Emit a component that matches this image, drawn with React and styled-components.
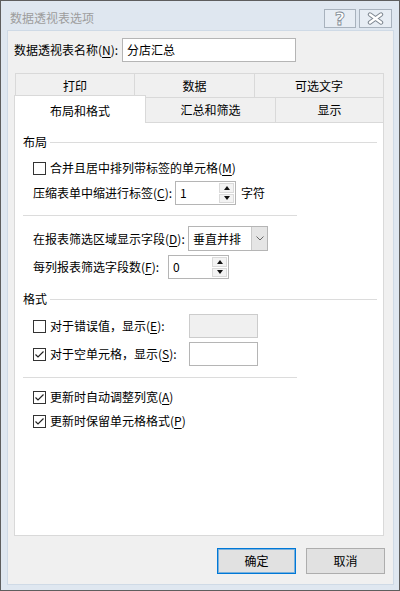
import React from 'react';
import styled, { createGlobalStyle } from 'styled-components';

const FONT = `"Noto Sans CJK SC", "Noto Sans", "Liberation Sans", sans-serif`;

const Global = createGlobalStyle`
  html, body { margin: 0; padding: 0; background: #fff; }
  body { font-family: ${FONT}; }
`;

const Window = styled.div`
  width: 400px;
  height: 591px;
  box-sizing: border-box;
  border: 1px solid #5e5e5e;
  background: #dfe7f0;
  display: flex;
  flex-direction: column;
  font-family: ${FONT};
  font-size: 12px;
  color: #000;
`;

const TitleBar = styled.div`
  height: 30px;
  flex: none;
  box-sizing: border-box;
  padding: 4px 7px 0 9px;
  display: flex;
  align-items: center;
`;

const Title = styled.div`
  color: #9d9d9d;
  font-size: 12px;
  line-height: 16px;
`;

const Controls = styled.div`
  margin-left: auto;
  display: flex;
  gap: 3px;
`;

const CtrlBtn = styled.div`
  width: ${p => p.$w}px;
  height: 19px;
  box-sizing: border-box;
  border: 1px solid #a8b2bd;
  background: #e7edf4;
  display: flex;
  align-items: center;
  justify-content: center;
`;

const HelpGlyph = styled.span`
  font-family: "DejaVu Sans", sans-serif;
  font-weight: bold;
  font-size: 18px;
  line-height: 17px;
  color: #fff;
  -webkit-text-stroke: 0.8px #7d8690;
`;

const Body = styled.div`
  flex: 1;
  margin: 0 6px 6px 7px;
  background: #f0f0f0;
  box-shadow: 0 0 0 1px #cfdae6;
  display: flex;
  flex-direction: column;
  padding: 7px 8px 0 6px;
`;

const NameRow = styled.div`
  display: flex;
  align-items: center;
  height: 24px;
`;

const Label = styled.div`
  width: ${p => (p.$w ? `${p.$w}px` : 'auto')};
  flex: none;
  line-height: 16px;
  white-space: nowrap;
`;

const U = styled.span`
  text-decoration: underline;
  text-underline-offset: 2px;
  text-decoration-thickness: 1px;
`;

const TextBox = styled.div`
  width: ${p => p.$w}px;
  height: 24px;
  box-sizing: border-box;
  border: 1px solid ${p => (p.$disabled ? '#cccccc' : '#b5b5b5')};
  background: ${p => (p.$disabled ? '#f0f0f0' : '#fff')};
  display: flex;
  align-items: center;
  padding-left: 4px;
  line-height: 16px;
`;

const Tabs = styled.div`
  margin-top: 11px;
  display: flex;
  flex-direction: column;
`;

const TabRow = styled.div`
  display: flex;
  align-items: flex-end;
  height: ${p => p.$h}px;
  padding-left: ${p => p.$pl || 0}px;
`;

const Tab = styled.div`
  width: ${p => p.$w}px;
  height: ${p => p.$h}px;
  box-sizing: border-box;
  border: 1px solid #d9d9d9;
  border-bottom: none;
  margin-left: ${p => (p.$first ? 0 : -1)}px;
  margin-bottom: ${p => (p.$active ? -1 : 0)}px;
  background: ${p => (p.$active ? '#fff' : '#f0f0f0')};
  position: ${p => (p.$active ? 'relative' : 'static')};
  z-index: ${p => (p.$active ? 1 : 'auto')};
  display: flex;
  align-items: center;
  justify-content: center;
  padding-top: ${p => (p.$active ? 2 : 0)}px;
  line-height: 16px;
`;

const Panel = styled.div`
  flex: 1;
  width: 370px;
  box-sizing: border-box;
  border: 1px solid #d9d9d9;
  background: #fff;
  padding: 11px 6px 0 8px;
  display: flex;
  flex-direction: column;
`;

const SectionHeader = styled.div`
  display: flex;
  align-items: center;
  gap: 3px;
  height: 16px;
  margin-top: ${p => p.$mt || 0}px;
  line-height: 16px;
`;

const Rule = styled.div`
  flex: 1;
  height: 1px;
  background: #dcdcdc;
`;

const Separator = styled.div`
  width: 274px;
  height: 1px;
  background: #dcdcdc;
  margin-top: ${p => p.$mt}px;
`;

const Row = styled.div`
  display: flex;
  align-items: center;
  height: ${p => p.$h}px;
  margin-top: ${p => p.$mt}px;
  padding-left: 10px;
`;

const CheckLabel = styled.div`
  display: flex;
  align-items: center;
  gap: 4px;
  width: ${p => (p.$w ? `${p.$w}px` : 'auto')};
  flex: none;
  line-height: 16px;
  white-space: nowrap;
`;

const Text = styled.span`
  line-height: 16px;
`;

const Box = styled.div`
  width: 13px;
  height: 13px;
  box-sizing: border-box;
  border: 1px solid #333;
  background: #fff;
  display: flex;
  align-items: center;
  justify-content: center;
`;

const Spinner = styled.div`
  width: ${p => p.$w}px;
  height: 24px;
  box-sizing: border-box;
  border: 1px solid #b5b5b5;
  background: #fff;
  display: flex;
`;

const SpinValue = styled.div`
  flex: 1;
  display: flex;
  align-items: center;
  padding-left: 4px;
  line-height: 16px;
`;

const SpinCol = styled.div`
  width: 15px;
  display: flex;
  flex-direction: column;
  padding: 1px 1px 1px 0;
  gap: 1px;
`;

const SpinBtn = styled.div`
  flex: 1;
  background: #f3f3f3;
  border: 1px solid #dadada;
  display: flex;
  align-items: center;
  justify-content: center;
`;

const Tri = styled.div`
  width: 0;
  height: 0;
  border-left: 3px solid transparent;
  border-right: 3px solid transparent;
  ${p => (p.$up ? 'border-bottom: 4px solid #111;' : 'border-top: 4px solid #111;')}
`;

const Suffix = styled.div`
  margin-left: 5px;
  line-height: 16px;
`;

const Combo = styled.div`
  width: 80px;
  height: 25px;
  box-sizing: border-box;
  border: 1px solid #b5b5b5;
  background: #fff;
  display: flex;
`;

const ComboText = styled.div`
  flex: 1;
  display: flex;
  align-items: center;
  padding-left: 4px;
  line-height: 16px;
`;

const ComboDrop = styled.div`
  width: 15px;
  background: #e5e5e5;
  border-left: 1px solid #c9c9c9;
  display: flex;
  align-items: center;
  justify-content: center;
`;

const ButtonRow = styled.div`
  display: flex;
  justify-content: flex-end;
  gap: 10px;
  margin: 12px 0 10px;
`;

const Button = styled.div`
  width: 79px;
  height: 26px;
  box-sizing: border-box;
  border: 1px solid ${p => (p.$primary ? '#0078d7' : '#adadad')};
  box-shadow: ${p => (p.$primary ? 'inset 0 0 0 1px rgba(0,120,215,0.45)' : 'none')};
  background: #e1e1e1;
  display: flex;
  align-items: center;
  justify-content: center;
  line-height: 16px;
`;

const Check = ({ checked }) => (
  <Box>
    {checked && (
      <svg width="11" height="11" viewBox="0 0 11 11">
        <path d="M1.5 5.5 L4 8 L9.5 2.5" fill="none" stroke="#222" strokeWidth="1.2" />
      </svg>
    )}
  </Box>
);

const CheckItem = ({ checked, w, children }) => (
  <CheckLabel $w={w}>
    <Check checked={checked} />
    <Text>{children}</Text>
  </CheckLabel>
);

const SpinBox = ({ w, value }) => (
  <Spinner $w={w}>
    <SpinValue>{value}</SpinValue>
    <SpinCol>
      <SpinBtn><Tri $up /></SpinBtn>
      <SpinBtn><Tri /></SpinBtn>
    </SpinCol>
  </Spinner>
);

export default function App() {
  return (
    <>
      <Global />
      <Window>
        <TitleBar>
          <Title>数据透视表选项</Title>
          <Controls>
            <CtrlBtn $w={32}><HelpGlyph>?</HelpGlyph></CtrlBtn>
            <CtrlBtn $w={33}>
              <svg width="17" height="13" viewBox="0 0 17 13">
                <path d="M3 2.5 L14 10.5 M14 2.5 L3 10.5" stroke="#7d8690" strokeWidth="4.4" strokeLinecap="round" fill="none" />
                <path d="M3 2.5 L14 10.5 M14 2.5 L3 10.5" stroke="#fff" strokeWidth="2.4" strokeLinecap="round" fill="none" />
              </svg>
            </CtrlBtn>
          </Controls>
        </TitleBar>
        <Body>
          <NameRow>
            <Label $w={108}>数据透视表名称(<U>N</U>):</Label>
            <TextBox $w={174}>分店汇总</TextBox>
          </NameRow>
          <Tabs>
            <TabRow $h={24} $pl={1}>
              <Tab $w={120} $h={24} $first>打印</Tab>
              <Tab $w={121} $h={24}>数据</Tab>
              <Tab $w={130} $h={24}>可选文字</Tab>
            </TabRow>
            <TabRow $h={25}>
              <Tab $w={132} $h={28} $first $active>布局和格式</Tab>
              <Tab $w={131} $h={25}>汇总和筛选</Tab>
              <Tab $w={109} $h={25}>显示</Tab>
            </TabRow>
          </Tabs>
          <Panel>
            <SectionHeader>布局<Rule /></SectionHeader>
            <Row $h={20} $mt={8}>
              <CheckItem>合并且居中排列带标签的单元格(<U>M</U>)</CheckItem>
            </Row>
            <Row $h={24} $mt={3}>
              <Label $w={142}>压缩表单中缩进行标签(<U>C</U>):</Label>
              <SpinBox w={61} value="1" />
              <Suffix>字符</Suffix>
            </Row>
            <Separator $mt={10} />
            <Row $h={25} $mt={10}>
              <Label $w={155}>在报表筛选区域显示字段(<U>D</U>):</Label>
              <Combo>
                <ComboText>垂直并排</ComboText>
                <ComboDrop>
                  <svg width="8" height="5" viewBox="0 0 8 5">
                    <path d="M0.5 0.5 L4 4 L7.5 0.5" fill="none" stroke="#666" strokeWidth="1" />
                  </svg>
                </ComboDrop>
              </Combo>
            </Row>
            <Row $h={24} $mt={4}>
              <Label $w={135}>每列报表筛选字段数(<U>F</U>):</Label>
              <SpinBox w={61} value="0" />
            </Row>
            <SectionHeader $mt={12}>格式<Rule /></SectionHeader>
            <Row $h={24} $mt={7}>
              <CheckItem w={156}>对于错误值，显示(<U>E</U>):</CheckItem>
              <TextBox $w={69} $disabled />
            </Row>
            <Row $h={24} $mt={4}>
              <CheckItem w={156} checked>对于空单元格，显示(<U>S</U>):</CheckItem>
              <TextBox $w={69} />
            </Row>
            <Separator $mt={11} />
            <Row $h={20} $mt={9}>
              <CheckItem checked>更新时自动调整列宽(<U>A</U>)</CheckItem>
            </Row>
            <Row $h={20} $mt={4}>
              <CheckItem checked>更新时保留单元格格式(<U>P</U>)</CheckItem>
            </Row>
          </Panel>
          <ButtonRow>
            <Button $primary>确定</Button>
            <Button>取消</Button>
          </ButtonRow>
        </Body>
      </Window>
    </>
  );
}
